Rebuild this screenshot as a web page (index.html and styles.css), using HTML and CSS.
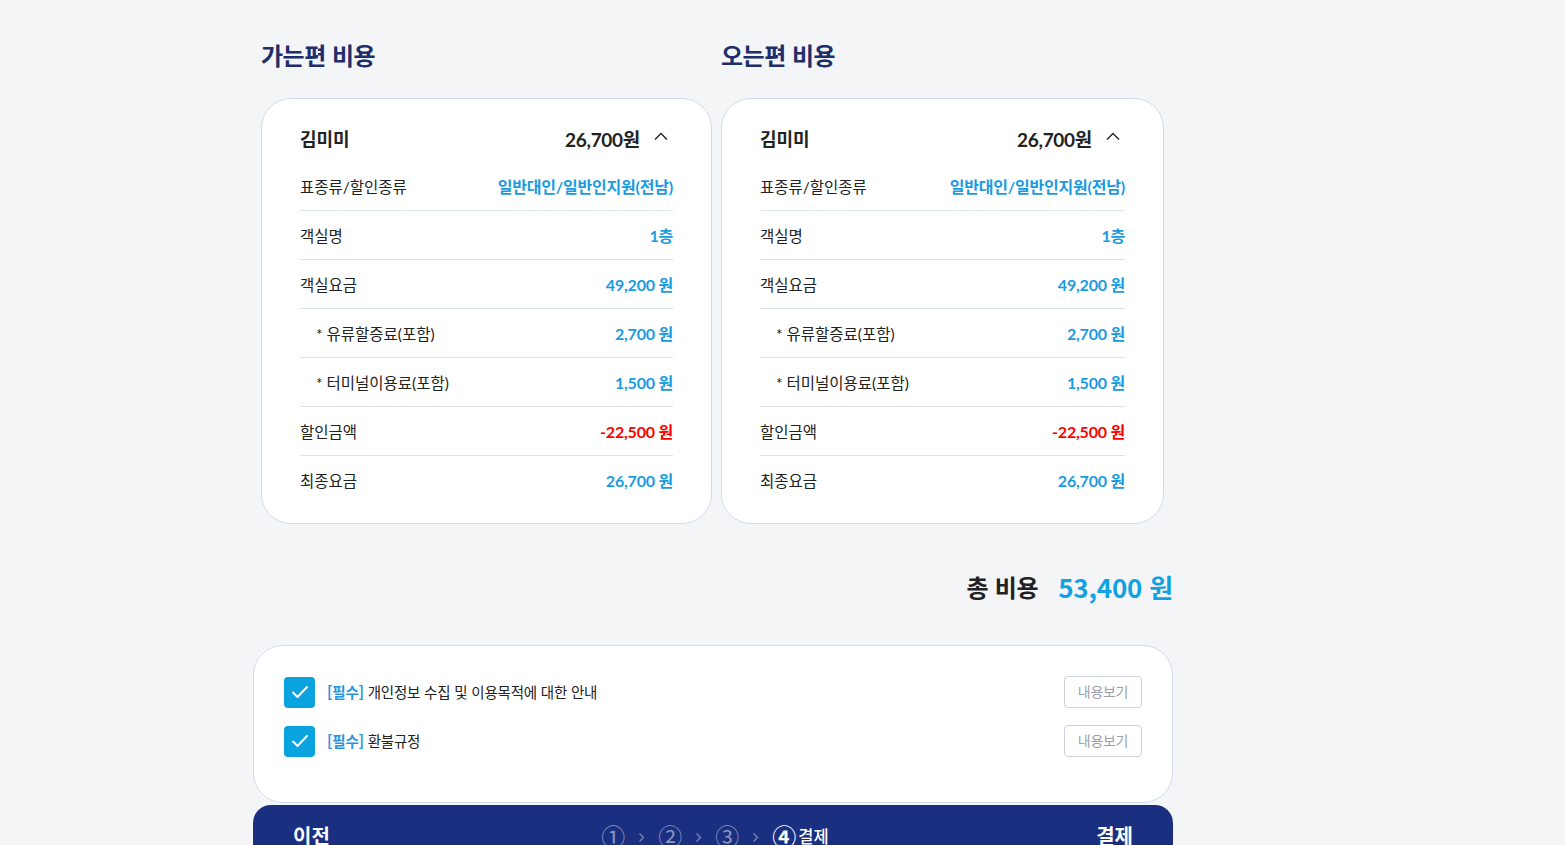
FILE: index.html
```html
<!DOCTYPE html>
<html lang="ko">
<head>
<meta charset="utf-8">
<title>결제</title>
<link rel="stylesheet" href="styles.css">
</head>
<body>
<div class="page">
  <div class="fares">
    <section class="fare-col">
      <h2 class="fare-title">가는편 비용</h2>
      <div class="fare-card">
        <div class="fare-head">
          <span class="fare-name">김미미</span>
          <span class="fare-sum">26,700원
            <svg class="chev" width="14" height="8" viewBox="0 0 14 8"><polyline points="1,7.5 7,1.5 13,7.5" fill="none" stroke="#222" stroke-width="1.4"/></svg>
          </span>
        </div>
        <div class="row"><span class="lbl">표종류/할인종류</span><span class="val">일반대인/일반인지원(전남)</span></div>
        <div class="row"><span class="lbl">객실명</span><span class="val">1층</span></div>
        <div class="row"><span class="lbl">객실요금</span><span class="val">49,200 원</span></div>
        <div class="row sub"><span class="lbl">* 유류할증료(포함)</span><span class="val">2,700 원</span></div>
        <div class="row sub"><span class="lbl">* 터미널이용료(포함)</span><span class="val">1,500 원</span></div>
        <div class="row"><span class="lbl">할인금액</span><span class="val red">-22,500 원</span></div>
        <div class="row"><span class="lbl">최종요금</span><span class="val">26,700 원</span></div>
      </div>
    </section>
    <section class="fare-col">
      <h2 class="fare-title">오는편 비용</h2>
      <div class="fare-card">
        <div class="fare-head">
          <span class="fare-name">김미미</span>
          <span class="fare-sum">26,700원
            <svg class="chev" width="14" height="8" viewBox="0 0 14 8"><polyline points="1,7.5 7,1.5 13,7.5" fill="none" stroke="#222" stroke-width="1.4"/></svg>
          </span>
        </div>
        <div class="row"><span class="lbl">표종류/할인종류</span><span class="val">일반대인/일반인지원(전남)</span></div>
        <div class="row"><span class="lbl">객실명</span><span class="val">1층</span></div>
        <div class="row"><span class="lbl">객실요금</span><span class="val">49,200 원</span></div>
        <div class="row sub"><span class="lbl">* 유류할증료(포함)</span><span class="val">2,700 원</span></div>
        <div class="row sub"><span class="lbl">* 터미널이용료(포함)</span><span class="val">1,500 원</span></div>
        <div class="row"><span class="lbl">할인금액</span><span class="val red">-22,500 원</span></div>
        <div class="row"><span class="lbl">최종요금</span><span class="val">26,700 원</span></div>
      </div>
    </section>
  </div>

  <div class="total">
    <span class="total-lbl">총 비용</span>
    <span class="total-val">53,400 원</span>
  </div>

  <div class="agree-card">
    <div class="agree-row">
      <label class="agree-check">
        <span class="box"><svg width="18" height="14" viewBox="0 0 18 14"><polyline points="2,7.5 6.5,12 16,2" fill="none" stroke="#fff" stroke-width="2" stroke-linecap="round" stroke-linejoin="round"/></svg></span>
        <span class="agree-text"><b class="req">[필수]</b> 개인정보 수집 및 이용목적에 대한 안내</span>
      </label>
      <button class="view-btn" type="button">내용보기</button>
    </div>
    <div class="agree-row">
      <label class="agree-check">
        <span class="box"><svg width="18" height="14" viewBox="0 0 18 14"><polyline points="2,7.5 6.5,12 16,2" fill="none" stroke="#fff" stroke-width="2" stroke-linecap="round" stroke-linejoin="round"/></svg></span>
        <span class="agree-text"><b class="req">[필수]</b> 환불규정</span>
      </label>
      <button class="view-btn" type="button">내용보기</button>
    </div>
  </div>

  <div class="bottom-bar">
    <span class="nav-prev">이전</span>
    <div class="steps">
      <span class="step">①</span>
      <svg class="arr" width="7" height="11" viewBox="0 0 7 11"><polyline points="1.5,1.5 5.5,5.5 1.5,9.5" fill="none" stroke="#7d89bd" stroke-width="1.2"/></svg>
      <span class="step">②</span>
      <svg class="arr" width="7" height="11" viewBox="0 0 7 11"><polyline points="1.5,1.5 5.5,5.5 1.5,9.5" fill="none" stroke="#7d89bd" stroke-width="1.2"/></svg>
      <span class="step">③</span>
      <svg class="arr" width="7" height="11" viewBox="0 0 7 11"><polyline points="1.5,1.5 5.5,5.5 1.5,9.5" fill="none" stroke="#7d89bd" stroke-width="1.2"/></svg>
      <span class="step on">④</span><span class="step-name">결제</span>
    </div>
    <span class="nav-next">결제</span>
  </div>
</div>
</body>
</html>
```

FILE: styles.css
```css
* { box-sizing: border-box; }
html, body { margin: 0; padding: 0; }
body {
  background: #f4f5f7;
  font-family: "Lato", "Noto Sans CJK KR", sans-serif;
  color: #222;
}
.page {
  width: 920px;
  margin-left: 253px;
  padding-top: 39px;
}
.fares {
  display: grid;
  grid-template-columns: 451px 443px;
  column-gap: 9px;
  padding: 0 8px;
}
.fare-title {
  margin: 0 0 27px;
  font-family: "Noto Sans CJK KR", sans-serif;
  font-size: 24px;
  line-height: 32px;
  font-weight: 700;
  color: #1e2d6b;
  letter-spacing: -0.5px;
}
.fare-card {
  background: #fff;
  border: 1px solid #d3dcec;
  border-radius: 30px;
  padding: 19px 38px 19px;
}
.fare-head {
  display: flex;
  justify-content: space-between;
  align-items: center;
  height: 44px;
  padding-bottom: 4px;
}
.fare-name {
  font-size: 18px;
  font-weight: 700;
  font-family: "Noto Sans CJK KR", sans-serif;
}
.fare-sum {
  display: flex;
  align-items: center;
  font-size: 19px;
  font-weight: 700;
  letter-spacing: -0.3px;
}
.chev { margin-left: 14px; margin-right: 5px; margin-top: -4px; }
.row {
  display: flex;
  justify-content: space-between;
  align-items: center;
  height: 49px;
  border-bottom: 1px solid #dde3ee;
  padding-bottom: 1px;
}
.row:last-child { border-bottom: 0; height: 48px; }
.row.sub .lbl { padding-left: 16px; }
.lbl { color: #222; font-size: 15.5px; }
.val { color: #1a9be0; font-weight: 700; font-size: 16px; letter-spacing: -0.2px; }
.val.red { color: #ff0000; }

.total {
  display: flex;
  justify-content: flex-end;
  align-items: center;
  margin-top: 44px;
  height: 38px;
  padding-bottom: 2px;
  font-family: "Noto Sans CJK KR", sans-serif;
  font-weight: 700;
}
.total-lbl { font-size: 24px; color: #222; letter-spacing: -0.3px; }
.total-val { font-size: 26px; color: #12a2e4; margin-left: 20px; letter-spacing: -0.2px; }

.agree-card {
  margin-top: 39px;
  background: #fff;
  border: 1px solid #d3dcec;
  border-radius: 30px;
  padding: 30px 30px 45px;
  display: flex;
  flex-direction: column;
  gap: 17px;
}
.agree-row {
  display: flex;
  justify-content: space-between;
  align-items: center;
  height: 32px;
}
.agree-check { display: flex; align-items: center; }
.box {
  width: 31px; height: 31px;
  border-radius: 4px;
  background: #0aa3e0;
  display: flex; align-items: center; justify-content: center;
}
.agree-text {
  margin-left: 12px;
  margin-top: -2px;
  font-family: "Noto Sans CJK KR", sans-serif;
  font-size: 14.5px;
  color: #222;
  letter-spacing: -0.2px;
}
.req { color: #2a95dc; font-weight: 700; }
.view-btn {
  width: 78px; height: 32px;
  border: 1px solid #c9d1de;
  border-radius: 4px;
  background: #fff;
  color: #9aa1ac;
  font-family: "Noto Sans CJK KR", sans-serif;
  font-size: 14px;
  letter-spacing: -0.3px;
  padding: 0 0 2px;
}

.bottom-bar {
  margin-top: 2px;
  height: 64px;
  background: #1b2f81;
  border-radius: 18px 18px 0 0;
  display: grid;
  grid-template-columns: 1fr auto 1fr;
  align-items: start;
  padding: 16px 40px 0;
  color: #fff;
  font-family: "Noto Sans CJK KR", sans-serif;
}
.nav-prev, .nav-next { font-size: 20px; font-weight: 700; line-height: 30px; }
.nav-next { justify-self: end; }
.steps { display: flex; align-items: center; height: 26px; margin-top: 2px; margin-left: 4px; }
.step { font-size: 24px; color: #8b95c2; line-height: 26px; font-weight: 400; }
.step.on { color: #fff; font-weight: 700; }
.arr { margin: 2px 13px 0; }
.step-name { font-size: 16.5px; font-weight: 500; margin-left: 2px; line-height: 26px; }
```
